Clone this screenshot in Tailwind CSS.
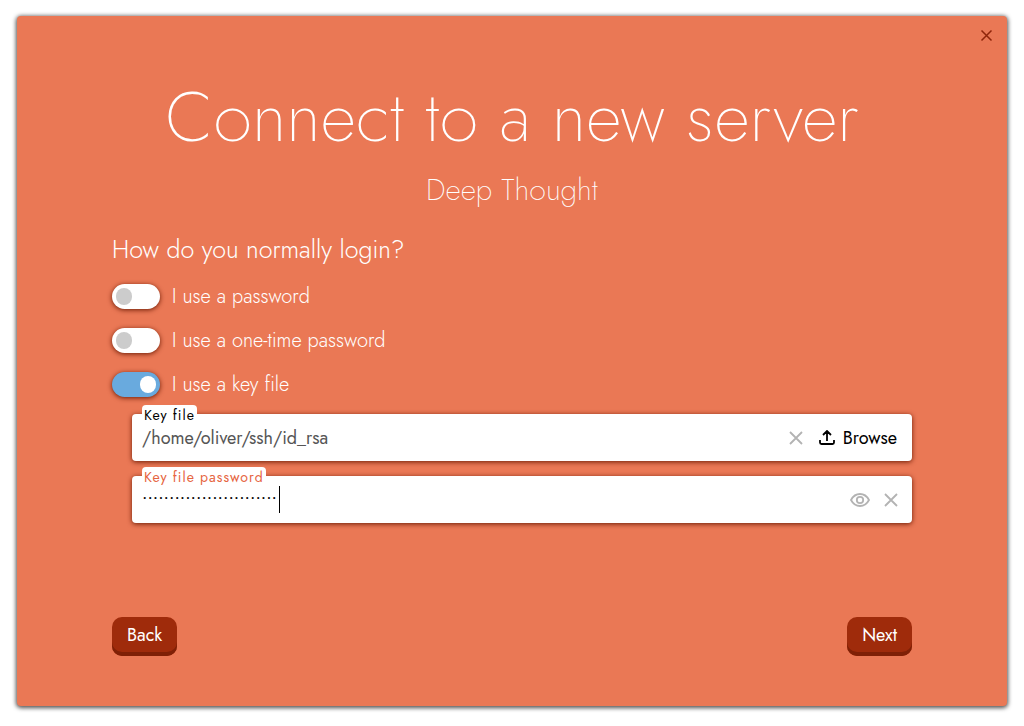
<!DOCTYPE html>
<html lang="en">

<head>
    <meta charset="UTF-8">
    <meta name="viewport" content="width=device-width, initial-scale=1.0">
    <title>Connect to a new server</title>
    <script src="https://cdn.jsdelivr.net/npm/@tailwindcss/browser@4"></script>
</head>

<body class="min-h-screen flex bg-white font-[Jost,Lato,sans-serif] px-[17px] pt-4 pb-5">
    <main class="relative grow flex flex-col rounded-[4px] bg-[#ea7855] px-8 pt-[63px] pb-[50px] shadow-[0_1px_4px_1px_#000000b0]">
        <button type="button" aria-label="Close"
            class="absolute top-3 right-[13px] size-[15px] flex items-center justify-center text-[#8f250a] cursor-pointer">
            <svg class="size-[13px]" viewBox="0 0 13 13" fill="none" stroke="currentColor" stroke-width="1.5">
                <path d="M1.500 1.500l10 10M11.500 1.500l-10 10" />
            </svg>
        </button>

        <div class="grow flex flex-col w-full max-w-[800px] mx-auto text-white">
            <h1 class="text-center text-[70px] leading-[76px] font-extralight">Connect to a new server</h1>
            <h2 class="mt-[17px] text-center text-[30px] leading-[36px] font-extralight">Deep Thought</h2>
            <h3 class="mt-6 text-[25px] leading-[34px] font-light">How do you normally login?</h3>

            <div class="mt-[18px] flex flex-col gap-[19px] text-[20px] leading-[25px] font-light">
                <label class="flex items-center gap-3 cursor-pointer">
                    <input type="checkbox" name="use_password"
                        class="appearance-none w-12 h-[25px] rounded-full bg-white shadow-[0_1px_5px_#6b1a04] checked:bg-[#69aade] before:block before:w-4 before:h-[17px] before:m-1 before:rounded-full before:bg-[#cccccc] checked:before:ml-[28px] checked:before:bg-white cursor-pointer">
                    I use a password
                </label>
                <label class="flex items-center gap-3 cursor-pointer">
                    <input type="checkbox" name="use_one_time_password"
                        class="appearance-none w-12 h-[25px] rounded-full bg-white shadow-[0_1px_5px_#6b1a04] checked:bg-[#69aade] before:block before:w-4 before:h-[17px] before:m-1 before:rounded-full before:bg-[#cccccc] checked:before:ml-[28px] checked:before:bg-white cursor-pointer">
                    I use a one-time password
                </label>
                <label class="flex items-center gap-3 cursor-pointer">
                    <input type="checkbox" name="use_key_file" checked
                        class="appearance-none w-12 h-[25px] rounded-full bg-white shadow-[0_1px_5px_#6b1a04] checked:bg-[#69aade] before:block before:w-4 before:h-[17px] before:m-1 before:rounded-full before:bg-[#cccccc] checked:before:ml-[28px] checked:before:bg-white cursor-pointer">
                    I use a key file
                </label>
            </div>

            <div class="mt-[17px] ml-5 flex flex-col gap-[15px]">
                <!-- Key file -->
                <div class="relative flex items-center h-[47px] rounded-[4px] bg-white pl-[10px] pr-[15px] shadow-[0_1px_5px_#6b1a04]">
                    <label for="key-file"
                        class="absolute left-[10px] -top-[9px] h-[20px] rounded-t-[4px] bg-white px-[2px] text-[14px] leading-[20px] tracking-[1px] text-black">Key file</label>
                    <input type="text" id="key-file" name="key_file" value="/home/oliver/ssh/id_rsa"
                        class="grow min-w-0 h-full text-[18px] text-[#555555] outline-none">
                    <button type="button" aria-label="Clear key file" class="text-[#b3b3b3] cursor-pointer">
                        <svg class="size-[14px]" viewBox="0 0 14 14" fill="none" stroke="currentColor" stroke-width="1.800">
                            <path d="M1 1l12 12M13 1L1 13" />
                        </svg>
                    </button>
                    <button type="button" class="ml-4 flex items-center gap-2 text-[18px] leading-[27px] pt-px text-black cursor-pointer">
                        <svg class="size-[16px]" viewBox="0 0 16 16" fill="none" stroke="currentColor" stroke-width="1.800">
                            <path d="M1 10v2.500q0 1.500 1.500 1.500h11q1.500 0 1.500-1.500v-2.500M8 11V2M4 5l4-4 4 4" />
                        </svg>
                        Browse
                    </button>
                </div>

                <!-- Key file password -->
                <div class="relative flex items-center h-[47px] rounded-[4px] bg-white pl-[10px] pr-[14px] shadow-[0_1px_5px_#6b1a04]">
                    <label for="key-file-password"
                        class="absolute left-[10px] -top-[9px] h-[20px] rounded-t-[4px] bg-white px-[2px] text-[14px] leading-[20px] tracking-[1px] text-[#e66440]">Key file password</label>
                    <input type="password" id="key-file-password" name="key_file_password"
                        value="heartofgoldheartofgold123"
                        class="grow min-w-0 h-full text-[18px] text-black outline-none">
                    <!-- Caret -->
                    <span class="absolute left-[147px] top-[10px] w-px h-[27px] bg-black"></span>
                    <button type="button" aria-label="Show password" class="text-[#b3b3b3] cursor-pointer">
                        <svg class="w-5 h-[14px]" viewBox="0 0 20 14" fill="none" stroke="currentColor" stroke-width="1.800">
                            <path d="M1 7q3.200-6 9-6t9 6q-3.200 6-9 6t-9-6z" />
                            <circle cx="10" cy="7" r="3.200" />
                        </svg>
                    </button>
                    <button type="button" aria-label="Clear password" class="ml-[14px] text-[#b3b3b3] cursor-pointer">
                        <svg class="size-[14px]" viewBox="0 0 14 14" fill="none" stroke="currentColor" stroke-width="1.800">
                            <path d="M1 1l12 12M13 1L1 13" />
                        </svg>
                    </button>
                </div>
            </div>

            <div class="mt-auto flex justify-between text-[18px] leading-[27px]">
                <button type="button"
                    class="px-[15px] pt-[5px] pb-[7px] rounded-[10px] bg-[#9f2b0b] shadow-[inset_0_-4px_0_#7f2006] cursor-pointer">Back</button>
                <button type="button"
                    class="px-[15px] pt-[5px] pb-[7px] rounded-[10px] bg-[#9f2b0b] shadow-[inset_0_-4px_0_#7f2006] cursor-pointer">Next</button>
            </div>
        </div>
    </main>
</body>

</html>
